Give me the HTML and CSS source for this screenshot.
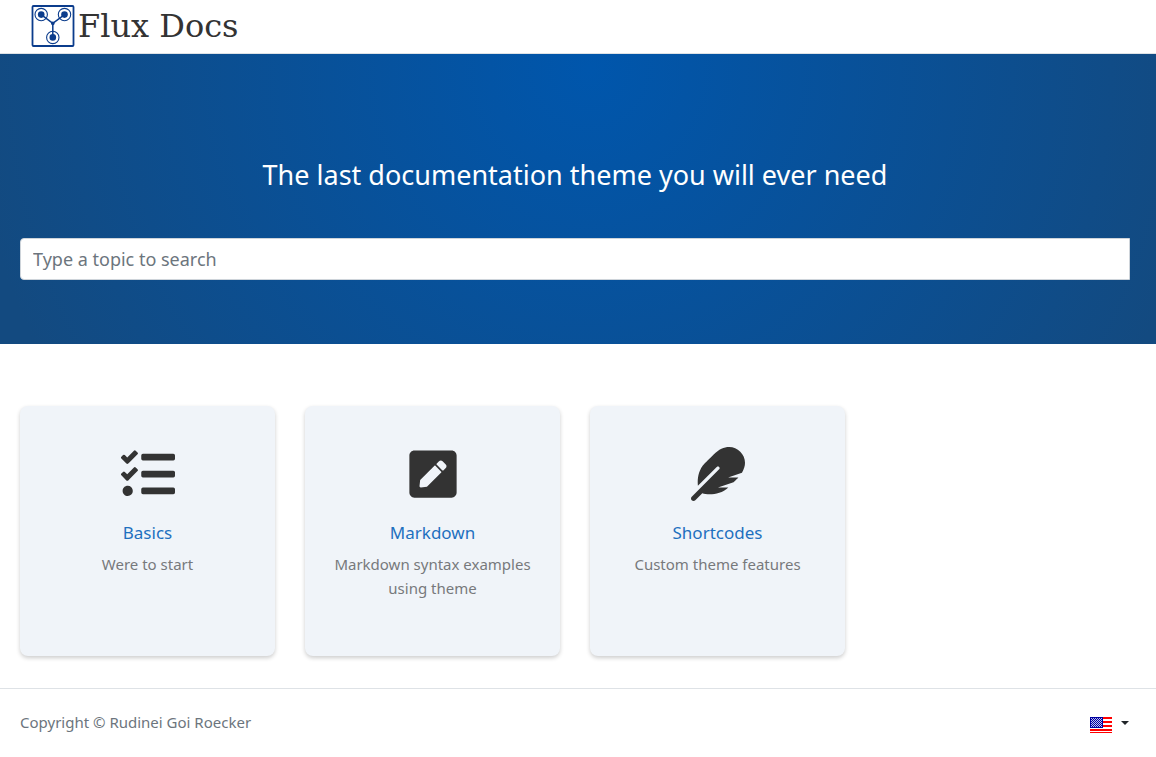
FILE: index.html
```html
<!DOCTYPE html>
<html lang="en">
<head>
<meta charset="utf-8">
<meta name="viewport" content="width=device-width, initial-scale=1">
<title>Flux Docs</title>
<link rel="stylesheet" href="styles.css">
</head>
<body>
<header class="navbar">
  <a class="brand" href="#">
    <svg class="brand-mark" viewBox="0 0 44 42" aria-hidden="true">
      <rect x="1.5" y="1" width="41" height="40" rx="1" fill="none" stroke="#0b3c8c" stroke-width="1.8"/>
      <g fill="none" stroke="#0b3c8c">
        <circle cx="10.2" cy="9.6" r="6.2" stroke-width="1.1"/>
        <circle cx="33.5" cy="9.6" r="6.2" stroke-width="1.1"/>
        <circle cx="21.8" cy="32.4" r="6.2" stroke-width="1.1"/>
        <path d="M10.2 9.6 21.8 18.4 33.5 9.6M21.8 18.4V32.4" stroke-width="1.5"/>
      </g>
      <g fill="#0b3c8c">
        <circle cx="10.2" cy="9.6" r="3.3"/>
        <circle cx="33.5" cy="9.6" r="3.3"/>
        <circle cx="21.8" cy="32.4" r="3.3"/>
        <circle cx="21.8" cy="18.4" r="1.8"/>
      </g>
    </svg>
    <span>Flux Docs</span>
  </a>
</header>
<main>
  <section class="hero">
    <h1 class="hero-title">The last documentation theme you will ever need</h1>
    <input class="search" type="search" placeholder="Type a topic to search" aria-label="Type a topic to search">
  </section>
  <section class="cards">
    <article class="card">
      <svg class="card-icon" viewBox="0 0 512 512" aria-hidden="true"><path d="M139.61 35.5a12 12 0 0 0-17 0L58.93 98.81l-22.7-22.12a12 12 0 0 0-17 0L3.53 92.41a12 12 0 0 0 0 17l47.59 47.4a12.78 12.78 0 0 0 17.61 0l15.59-15.62L156.52 69a12.09 12.09 0 0 0 .09-17zm0 159.19a12 12 0 0 0-17 0l-63.68 63.72-22.7-22.1a12 12 0 0 0-17 0L3.53 252a12 12 0 0 0 0 17L51 316.5a12.77 12.77 0 0 0 17.6 0l15.7-15.69 72.2-72.22a12 12 0 0 0 .09-16.9zM64 368c-26.49 0-48.59 21.5-48.59 48S37.53 464 64 464a48 48 0 0 0 0-96zm432 16H208a16 16 0 0 0-16 16v32a16 16 0 0 0 16 16h288a16 16 0 0 0 16-16v-32a16 16 0 0 0-16-16zm0-320H208a16 16 0 0 0-16 16v32a16 16 0 0 0 16 16h288a16 16 0 0 0 16-16V80a16 16 0 0 0-16-16zm0 160H208a16 16 0 0 0-16 16v32a16 16 0 0 0 16 16h288a16 16 0 0 0 16-16v-32a16 16 0 0 0-16-16z"/></svg>
      <h2 class="card-title"><a href="#">Basics</a></h2>
      <p class="card-text">Were to start</p>
    </article>
    <article class="card">
      <svg class="card-icon" viewBox="-32 0 512 512" aria-hidden="true"><path d="M400 480H48c-26.5 0-48-21.5-48-48V80c0-26.5 21.5-48 48-48h352c26.5 0 48 21.5 48 48v352c0 26.5-21.5 48-48 48zM238.1 177.9L102.4 313.6l-6.3 57.1c-.8 7.6 5.6 14.1 13.3 13.3l57.1-6.3L302.2 242c2.3-2.3 2.3-6.1 0-8.5L246.7 178c-2.5-2.4-6.3-2.4-8.6-.1zM345 165.1L314.9 135c-9.4-9.4-24.6-9.4-33.9 0l-23.1 23.1c-2.3 2.3-2.3 6.1 0 8.5l55.5 55.5c2.3 2.3 6.1 2.3 8.5 0L345 199c9.3-9.3 9.3-24.5 0-33.9z"/></svg>
      <h2 class="card-title"><a href="#">Markdown</a></h2>
      <p class="card-text">Markdown syntax examples using theme</p>
    </article>
    <article class="card">
      <svg class="card-icon" viewBox="0 0 512 512" aria-hidden="true"><path d="M467.14 44.84c-62.55-62.48-161.67-64.78-252.28 25.73-78.61 78.52-60.98 60.92-85.75 85.66-60.46 60.39-70.39 150.83-63.64 211.17l178.44-178.25c6.26-6.25 16.4-6.25 22.65 0s6.25 16.38 0 22.63L7.04 471.03c-9.38 9.37-9.38 24.57 0 33.94 9.38 9.37 24.6 9.37 33.98 0l66.1-66.03C159.42 454.65 279 457.11 353.95 384h-98.19l147.57-49.14c49.99-49.93 36.38-36.18 46.31-46.86h-97.78l131.54-43.8c45.44-74.46 34.31-148.84-16.26-199.36z"/></svg>
      <h2 class="card-title"><a href="#">Shortcodes</a></h2>
      <p class="card-text">Custom theme features</p>
    </article>
  </section>
</main>
<footer class="footer">
  <span>Copyright © Rudinei Goi Roecker</span>
  <button class="language" type="button" aria-label="Language: English">
    <svg class="flag" viewBox="0 0 22 16" shape-rendering="crispEdges" aria-hidden="true">
      <path fill="#fff" d="M0 0h22v16H0z"/>
      <path fill="#f00" d="M0 0h22v2H0zM0 4h22v2H0zM0 8h22v2H0zM0 12h22v2H0zM0 15h22v1H0z"/>
      <path fill="#0000a0" d="M0 0h13v11H0z"/>
      <path stroke="#c0c0f0" stroke-dasharray="1 1" d="M1 1.5h11M2 2.5h10M1 3.5h11M2 4.5h10M1 5.5h11M2 6.5h10M1 7.5h11M2 8.5h10M1 9.5h11"/>
    </svg>
    <span class="caret"></span>
  </button>
</footer>
</body>
</html>
```

FILE: styles.css
```css
* {
  box-sizing: border-box;
}

body {
  margin: 0;
  background: #fff;
  color: #6c757d;
  font-family: "Segoe UI", "Noto Sans", sans-serif;
  font-size: 15px;
  line-height: 24px;
}

.navbar {
  display: flex;
  padding: 4px 31px 5px;
  border-bottom: 1px solid #dee2e6;
}

.brand {
  display: flex;
  align-items: center;
  gap: 3px;
  color: #333;
  font-family: "DejaVu Serif", serif;
  font-size: 32px;
  line-height: 44px;
  text-decoration: none;
}

.brand-mark {
  width: 44px;
  height: 42px;
}

.hero {
  padding: 100px 26px 64px 20px;
  background: radial-gradient(circle at 51% 5%, #0056ac 0, #134a80 620px);
  text-align: center;
}

.hero-title {
  margin: 0 0 42px;
  color: #fff;
  font-size: 27px;
  font-weight: 400;
  line-height: 42px;
}

.search {
  display: block;
  width: 100%;
  height: 42px;
  padding: 0 12px;
  border: 1px solid #ced4da;
  border-radius: 4px 0 0 4px;
  background: #fff;
  color: #495057;
  font: inherit;
  font-size: 18px;
  appearance: none;
}

.search::placeholder {
  color: #6c757d;
  opacity: 1;
}

.cards {
  display: grid;
  grid-template-columns: repeat(auto-fill, minmax(250px, 1fr));
  gap: 30px;
  padding: 62px 26px 32px 20px;
}

.card {
  min-height: 250px;
  padding: 41px 24px;
  border-radius: 8px;
  background: #f0f4f9;
  box-shadow: 0 2px 4px rgba(0, 0, 0, 0.2);
  text-align: center;
}

.card-icon {
  display: block;
  width: 54px;
  height: 54px;
  margin: 0 auto 20px;
  fill: #333;
}

.card-title {
  margin: 0 0 7px;
  font-size: 17px;
  font-weight: 400;
  line-height: 24px;
}

.card-title a {
  color: #1e70bf;
  text-decoration: none;
}

.card-text {
  margin: 0;
  color: #77797c;
}

.footer {
  display: flex;
  justify-content: space-between;
  align-items: flex-start;
  padding: 21px 27px 22px 20px;
  border-top: 1px solid #dee2e6;
}

.language {
  display: flex;
  align-items: center;
  gap: 9px;
  padding: 7px 0 0;
  border: 0;
  background: none;
}

.flag {
  width: 22px;
  height: 16px;
}

.caret {
  margin-bottom: 4px;
  border: 4px solid transparent;
  border-top-color: #212529;
  border-bottom: 0;
}
```
